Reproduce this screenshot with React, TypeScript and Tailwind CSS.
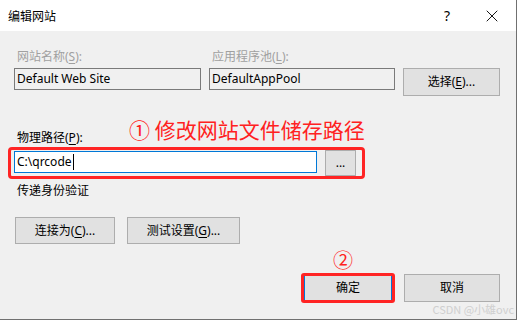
import { X } from "lucide-react";

const font = "font-['Segoe_UI','Noto_Sans','Noto_Sans_CJK_SC',sans-serif]";

function Key({ k }: { k: string }) {
  return <span className="underline underline-offset-2 decoration-1">{k}</span>;
}

function WinButton({ children, className = "" }: { children: React.ReactNode; className?: string }) {
  return (
    <div
      className={`flex items-center justify-center bg-[#e1e1e1] border border-[#adadad] text-[12px] text-black ${className}`}
    >
      {children}
    </div>
  );
}

export default function App() {
  return (
    <div className={`w-[518px] h-[321px] bg-white ${font}`}>
      <div className="relative w-[517px] h-[320px] bg-[#f0f0f0] border-r border-b border-[#707070] flex flex-col">
        {/* title bar */}
        <div className="h-[31px] bg-white flex items-center pl-[8px] pr-[14px] shrink-0">
          <span className="text-[12px] text-black font-['Noto_Sans_CJK_SC',sans-serif]">编辑网站</span>
          <span className="ml-auto text-[14px] text-black mr-[32px] leading-none">?</span>
          <X className="w-[20px] h-[20px] text-black" strokeWidth={1.1} />
        </div>

        <div className="pl-[14px] pr-[16px] flex flex-col text-[12px] leading-[16px]">
          {/* site name + app pool */}
          <div className="mt-[18px] flex gap-[8px] text-[#a0a0a0]">
            <div className="w-[187px] pl-[3px]">
              网站名称(<Key k="S" />):
            </div>
            <div className="w-[186px] pl-[3px]">
              应用程序池(<Key k="L" />):
            </div>
          </div>
          <div className="mt-[3px] flex items-start gap-[8px]">
            <div className="w-[187px] h-[22px] border border-[#7a7a7a] flex items-center pl-[2px] text-black">
              Default Web Site
            </div>
            <div className="w-[186px] h-[22px] border border-[#7a7a7a] flex items-center pl-[2px] text-black">
              DefaultAppPool
            </div>
            <WinButton className="w-[97px] h-[28px]">
              选择(<Key k="E" />)...
            </WinButton>
          </div>

          {/* physical path */}
          <div className="relative mt-[34px] pl-[3px] text-black">
            物理路径(<Key k="P" />):
            <span className="absolute left-[115px] top-[-13px] text-[21px] leading-[24px] text-[#ff2121] whitespace-nowrap font-['Noto_Sans_CJK_SC',sans-serif]">
              ① 修改网站文件储存路径
            </span>
          </div>
          <div className="relative mt-[4px] flex items-start gap-[8px]">
            <div className="mt-[1px] w-[303px] h-[22px] bg-white border border-[#0078d7] flex items-center pl-[2px] text-black">
              C:\qrcode
              <span className="ml-[1px] w-px h-[16px] bg-black" />
            </div>
            <WinButton className="w-[31px] h-[26px]">...</WinButton>
            <div className="absolute left-[-6px] top-[-3px] w-[357px] h-[32px] border-[3px] border-[#ff2424] rounded-[4px]" />
          </div>

          <div className="mt-[7px] pl-[3px] text-black">传递身份验证</div>

          <div className="mt-[18px] flex gap-[12px]">
            <WinButton className="ml-[1px] w-[100px] h-[27px]">
              连接为(<Key k="C" />)...
            </WinButton>
            <WinButton className="w-[113px] h-[27px]">
              测试设置(<Key k="G" />)...
            </WinButton>
          </div>

          {/* OK / Cancel */}
          <div className="mt-[30px] flex justify-end gap-[11px]">
            <div className="relative">
              <span className="absolute left-[30px] top-[-25px] text-[20px] leading-[22px] text-[#ff2121] font-['Noto_Sans_CJK_SC',sans-serif]">
                ②
              </span>
              <div className="w-[90px] h-[28px] bg-[#e1e1e1] border-2 border-[#0078d7] flex items-center justify-center text-black">
                确定
              </div>
              <div className="absolute left-[-2px] top-[-1px] w-[94px] h-[30px] border-[3px] border-[#ff2424] rounded-[3px]" />
            </div>
            <WinButton className="w-[96px] h-[28px]">取消</WinButton>
          </div>
        </div>

        <span className="absolute right-[2px] bottom-[4px] text-[11px] leading-[12px] text-[#cfcfcf] font-['Noto_Sans_CJK_SC',sans-serif]">
          CSDN @小雄ovc
        </span>
      </div>
    </div>
  );
}
